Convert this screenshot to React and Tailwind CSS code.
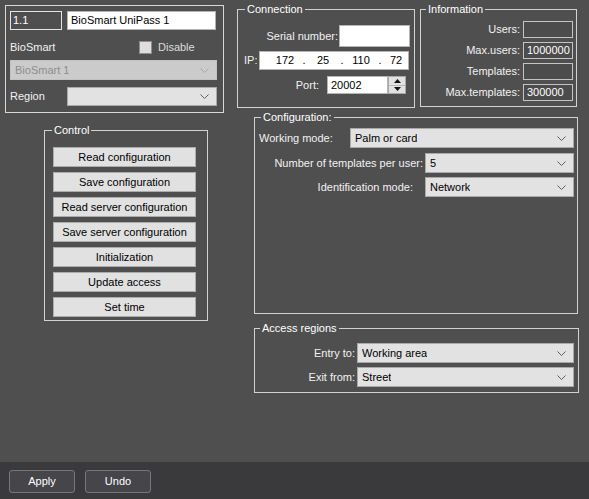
import React from "react";

const Chevron = ({ color = "#5a5a5a" }) => (
  <svg width="9" height="5" viewBox="0 0 9 5" className="shrink-0">
    <path d="M0.5 0.5 L4.5 4.5 L8.5 0.5" fill="none" stroke={color} strokeWidth="1" />
  </svg>
);

const Select = ({ value, className = "", disabled = false }) => (
  <div
    className={`flex items-center justify-between pl-[4px] pr-[7px] border ${
      disabled
        ? "bg-[#cbcbcb] border-[#c2c2c2] text-[#8e8e8e]"
        : "bg-[#e2e2e2] border-[#a9a9a9] text-black"
    } ${className}`}
  >
    <span className="truncate">{value}</span>
    <Chevron color={disabled ? "#a8a8a8" : "#606060"} />
  </div>
);

const TextBox = ({ value = "", className = "" }) => (
  <div className={`flex items-center pl-[3px] bg-white border border-[#b4b4b4] text-black ${className}`}>
    {value}
  </div>
);

const InfoBox = ({ value = "" }) => (
  <div className="flex items-center w-[50px] h-[17px] pl-[3px] border border-[#c4c4c4] bg-[#4c4c4c] text-white">
    {value}
  </div>
);

const Group = ({ title, className = "", legendClass = "ml-[7px]", children }) => (
  <fieldset className={`border border-[#d2d2d2] p-0 m-0 min-w-0 ${className}`}>
    <legend className={`px-[2px] leading-[13px] text-white ${legendClass}`}>{title}</legend>
    {children}
  </fieldset>
);

const controlButtons = [
  "Read configuration",
  "Save configuration",
  "Read server configuration",
  "Save server configuration",
  "Initialization",
  "Update access",
  "Set time",
];

const infoRows = [
  { label: "Users:", value: "" },
  { label: "Max.users:", value: "1000000" },
  { label: "Templates:", value: "" },
  { label: "Max.templates:", value: "300000" },
];

export default function App() {
  return (
    <div className="w-[589px] h-[499px] flex flex-col overflow-hidden bg-[#4f4f4f] text-[#f2f2f2] text-[11px] leading-[13px] font-['Liberation_Sans',Arial,sans-serif]">
      <div className="flex-1 flex">
        {/* Left column */}
        <div className="w-[237px] flex flex-col">
          {/* Device */}
          <div className="mt-[5px] ml-[5px] w-[219px] h-[108px] border border-[#d8d8d8] pl-[4px]">
            <div className="flex gap-[5px] mt-[5px]">
              <div className="w-[52px] h-[19px] flex items-center pl-[2px] border border-[#e4e4e4] text-white">
                1.1
              </div>
              <TextBox value="BioSmart UniPass 1" className="w-[149px] h-[19px]" />
            </div>
            <div className="flex items-center mt-[11px] h-[13px]">
              <span className="w-[129px]">BioSmart</span>
              <span className="w-[13px] h-[13px] border border-[#8e8e8e] bg-[#dedede]" />
              <span className="ml-[6px] text-[#dcdcdc]">Disable</span>
            </div>
            <Select value="BioSmart 1" disabled className="mt-[6px] w-[207px] h-[20px]" />
            <div className="flex items-center mt-[7px]">
              <span className="w-[57px]">Region</span>
              <Select value="" className="w-[150px] h-[19px]" />
            </div>
          </div>

          {/* Control */}
          <Group title="Control" className="mt-[11px] ml-[44px] w-[164px] h-[197px]">
            <div className="flex flex-col gap-[5px] pt-[10px] pl-[8px]">
              {controlButtons.map((label) => (
                <button
                  key={label}
                  className="w-[143px] h-[20px] bg-[#e1e1e1] border border-[#acacac] text-black text-[11px] leading-[13px]"
                >
                  {label}
                </button>
              ))}
            </div>
          </Group>
        </div>

        {/* Right column */}
        <div className="flex-1 flex flex-col">
          <div className="flex mt-[3px]">
            {/* Connection */}
            <Group title="Connection" className="w-[178px] h-[105px]">
              <div className="flex flex-col pr-[4px]">
                <div className="flex items-center justify-end mt-[9px]">
                  <span className="mr-[1px]">Serial number:</span>
                  <TextBox className="w-[71px] h-[22px]" />
                </div>
                <div className="flex items-center mt-[4px] pl-[6px]">
                  <span className="w-[15px]">IP:</span>
                  <div className="w-[150px] h-[19px] flex items-center bg-white border border-[#b4b4b4] text-black pl-[10px]">
                    <span className="w-[30px] text-center">172</span>
                    <span className="w-[8px] text-center">.</span>
                    <span className="w-[30px] text-center">25</span>
                    <span className="w-[8px] text-center">.</span>
                    <span className="w-[30px] text-center">110</span>
                    <span className="w-[8px] text-center">.</span>
                    <span className="w-[24px] text-center">72</span>
                  </div>
                </div>
                <div className="flex items-center justify-end mt-[6px] pr-[4px]">
                  <span className="mr-[8px]">Port:</span>
                  <TextBox value="20002" className="w-[61px] h-[18px]" />
                  <div className="w-[18px] h-[18px] flex flex-col bg-[#e1e1e1] border border-[#a9a9a9]">
                    <div className="flex-1 flex items-center justify-center border-b border-[#b8b8b8]">
                      <svg width="7" height="4" viewBox="0 0 7 4">
                        <path d="M0 4 L3.5 0 L7 4 Z" fill="#111" />
                      </svg>
                    </div>
                    <div className="flex-1 flex items-center justify-center">
                      <svg width="7" height="4" viewBox="0 0 7 4">
                        <path d="M0 0 L3.5 4 L7 0 Z" fill="#111" />
                      </svg>
                    </div>
                  </div>
                </div>
              </div>
            </Group>

            {/* Information */}
            <Group title="Information" legendClass="ml-[5px]" className="ml-[5px] w-[157px] h-[104px]">
              <div className="flex flex-col gap-[4px] mt-[5px] pr-[3px]">
                {infoRows.map((row) => (
                  <div key={row.label} className="flex items-center justify-end">
                    <span className="mr-[3px]">{row.label}</span>
                    <InfoBox value={row.value} />
                  </div>
                ))}
              </div>
            </Group>
          </div>

          {/* Configuration */}
          <Group title="Configuration:" legendClass="ml-[6px]" className="mt-[3px] ml-[17px] w-[324px] h-[203px]">
            <div className="flex flex-col pr-[3px]">
              <div className="flex items-center justify-between mt-[4px] pl-[4px]">
                <span>Working mode:</span>
                <Select value="Palm or card" className="w-[224px] h-[20px]" />
              </div>
              <div className="flex items-center justify-end mt-[5px]">
                <span className="mr-[2px]">Number of templates per user:</span>
                <Select value="5" className="w-[149px] h-[20px]" />
              </div>
              <div className="flex items-center justify-end mt-[4px]">
                <span className="mr-[12px]">Identification mode:</span>
                <Select value="Network" className="w-[149px] h-[20px]" />
              </div>
            </div>
          </Group>

          {/* Access regions */}
          <Group title="Access regions" legendClass="ml-[5px]" className="mt-[8px] ml-[17px] w-[325px] h-[71px]">
            <div className="flex flex-col pr-[4px]">
              <div className="flex items-center justify-end mt-[8px]">
                <span className="mr-[2px]">Entry to:</span>
                <Select value="Working area" className="w-[217px] h-[20px]" />
              </div>
              <div className="flex items-center justify-end mt-[4px]">
                <span className="mr-[2px]">Exit from:</span>
                <Select value="Street" className="w-[217px] h-[20px]" />
              </div>
            </div>
          </Group>
        </div>
      </div>

      {/* Bottom bar */}
      <div className="h-[37px] shrink-0 flex items-start gap-[10px] pt-[8px] pl-[9px] bg-[#3a393b]">
        <button className="w-[66px] h-[23px] rounded-[3px] border border-[#77767b] bg-[#46454a] text-white text-[11px]">
          Apply
        </button>
        <button className="w-[66px] h-[23px] rounded-[3px] border border-[#77767b] bg-[#46454a] text-white text-[11px]">
          Undo
        </button>
      </div>
    </div>
  );
}
